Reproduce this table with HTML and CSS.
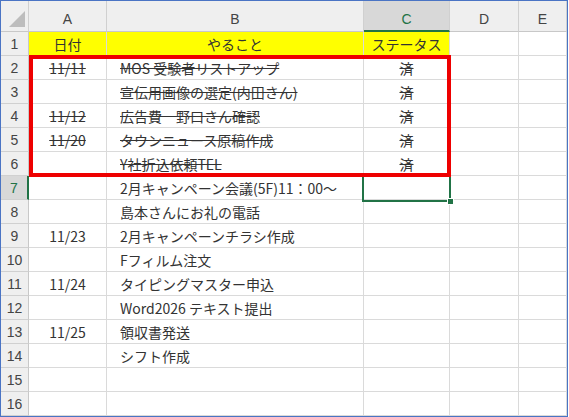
FILE: index.html
```html
<!DOCTYPE html>
<html lang="ja">
<head>
<meta charset="utf-8">
<link rel="stylesheet" href="styles.css">
</head>
<body>
<div class="sheet">
  <div class="grid">
    <div class="ch corner"><span class="tri"></span></div>
    <div class="ch">A</div>
    <div class="ch">B</div>
    <div class="ch sel-col">C</div>
    <div class="ch">D</div>
    <div class="ch">E</div>

    <div class="rh">1</div>
    <div class="c ctr yel">日付</div>
    <div class="c ctr yel">やること</div>
    <div class="c ctr yel">ステータス</div>
    <div class="c"></div>
    <div class="c"></div>

    <div class="rh">2</div>
    <div class="c ctr done">11/11</div>
    <div class="c task done">MOS 受験者リストアップ</div>
    <div class="c ctr done">済</div>
    <div class="c"></div>
    <div class="c"></div>

    <div class="rh">3</div>
    <div class="c ctr"></div>
    <div class="c task done">宣伝用画像の選定(内田さん)</div>
    <div class="c ctr done">済</div>
    <div class="c"></div>
    <div class="c"></div>

    <div class="rh">4</div>
    <div class="c ctr done">11/12</div>
    <div class="c task done">広告費　野口さん確認</div>
    <div class="c ctr done">済</div>
    <div class="c"></div>
    <div class="c"></div>

    <div class="rh">5</div>
    <div class="c ctr done">11/20</div>
    <div class="c task done">タウンニュース原稿作成</div>
    <div class="c ctr done">済</div>
    <div class="c"></div>
    <div class="c"></div>

    <div class="rh">6</div>
    <div class="c ctr"></div>
    <div class="c task done">Y社折込依頼TEL</div>
    <div class="c ctr done">済</div>
    <div class="c"></div>
    <div class="c"></div>

    <div class="rh sel-row">7</div>
    <div class="c ctr"></div>
    <div class="c task">2月キャンペーン会議(5F)11：00～</div>
    <div class="c ctr"></div>
    <div class="c"></div>
    <div class="c"></div>

    <div class="rh">8</div>
    <div class="c ctr"></div>
    <div class="c task">島本さんにお礼の電話</div>
    <div class="c ctr"></div>
    <div class="c"></div>
    <div class="c"></div>

    <div class="rh">9</div>
    <div class="c ctr">11/23</div>
    <div class="c task">2月キャンペーンチラシ作成</div>
    <div class="c ctr"></div>
    <div class="c"></div>
    <div class="c"></div>

    <div class="rh">10</div>
    <div class="c ctr"></div>
    <div class="c task">Fフィルム注文</div>
    <div class="c ctr"></div>
    <div class="c"></div>
    <div class="c"></div>

    <div class="rh">11</div>
    <div class="c ctr">11/24</div>
    <div class="c task">タイピングマスター申込</div>
    <div class="c ctr"></div>
    <div class="c"></div>
    <div class="c"></div>

    <div class="rh">12</div>
    <div class="c ctr"></div>
    <div class="c task">Word2026 テキスト提出</div>
    <div class="c ctr"></div>
    <div class="c"></div>
    <div class="c"></div>

    <div class="rh">13</div>
    <div class="c ctr">11/25</div>
    <div class="c task">領収書発送</div>
    <div class="c ctr"></div>
    <div class="c"></div>
    <div class="c"></div>

    <div class="rh">14</div>
    <div class="c ctr"></div>
    <div class="c task">シフト作成</div>
    <div class="c ctr"></div>
    <div class="c"></div>
    <div class="c"></div>

    <div class="rh">15</div>
    <div class="c ctr"></div>
    <div class="c task"></div>
    <div class="c ctr"></div>
    <div class="c"></div>
    <div class="c"></div>

    <div class="rh">16</div>
    <div class="c ctr"></div>
    <div class="c task"></div>
    <div class="c ctr"></div>
    <div class="c"></div>
    <div class="c"></div>
  </div>
  <div class="selection"><span class="handle"></span></div>
  <div class="redbox"></div>
</div>
</body>
</html>
```

FILE: styles.css
```css
* { box-sizing: border-box; }
html, body { margin: 0; padding: 0; background: #ffffff; }
body {
  font-family: "Noto Sans CJK JP", "Noto Sans", sans-serif;
  font-size: 14px;
  color: #333333;
}
.sheet {
  position: relative;
  width: 568px;
  height: 417px;
  border: 1px solid #4a74c4;
  overflow: hidden;
}
.grid {
  display: grid;
  grid-template-columns: 28px 78px 257px 86px 69px 48px;
  grid-template-rows: 31px repeat(16, 24px);
}
.ch {
  background: #efefef;
  border-right: 1px solid #d0d0d0;
  border-bottom: 1px solid #c8c8c8;
  display: flex;
  align-items: center;
  justify-content: center;
  padding-top: 6px;
  font-family: "Liberation Sans", "DejaVu Sans", sans-serif;
  font-size: 14px;
  color: #444444;
}
.corner { position: relative; }
.tri {
  position: absolute;
  right: 3px;
  bottom: 4px;
  width: 0;
  height: 0;
  border-left: 16px solid transparent;
  border-bottom: 16px solid #bdbdbd;
}
.sel-col {
  background: #d8d8d8;
  border-bottom: 2px solid #217346;
  color: #217346;
}
.rh {
  background: #efefef;
  border-right: 1px solid #c8c8c8;
  border-bottom: 1px solid #d0d0d0;
  display: flex;
  align-items: center;
  justify-content: center;
  font-family: "Liberation Sans", "DejaVu Sans", sans-serif;
  font-size: 14px;
  color: #444444;
}
.sel-row {
  background: #d8d8d8;
  border-right: 2px solid #217346;
  color: #217346;
}
.c {
  border-right: 1px solid #dadada;
  border-bottom: 1px solid #dadada;
  display: flex;
  align-items: center;
  white-space: nowrap;
  overflow: hidden;
  line-height: 1;
}
.ctr { justify-content: center; }
.task { padding-left: 13px; }
.yel { background: #ffff00; }
.done { text-decoration: line-through; text-decoration-thickness: 1px; }
.redbox {
  position: absolute;
  left: 28px;
  top: 54px;
  width: 422px;
  height: 122px;
  border: 4px solid #ee0000;
  pointer-events: none;
}
.selection {
  position: absolute;
  left: 361px;
  top: 174px;
  width: 89px;
  height: 27px;
  border: 2px solid #217346;
}
.handle {
  position: absolute;
  right: -5px;
  bottom: -5px;
  width: 7px;
  height: 7px;
  background: #217346;
  border: 1px solid #ffffff;
}
```
